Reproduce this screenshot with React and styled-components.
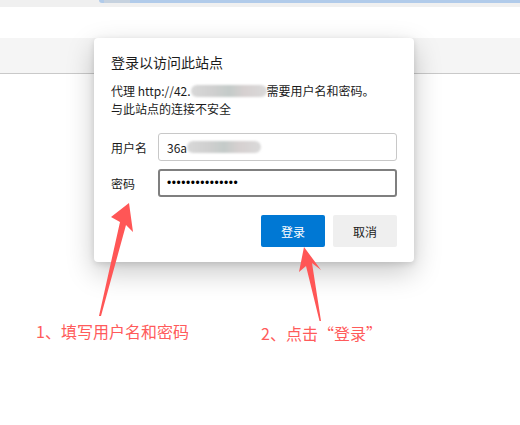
import React from "react";
import styled, { createGlobalStyle } from "styled-components";

const Global = createGlobalStyle`
  html, body { margin: 0; padding: 0; background: #fff; }
  body { font-family: "Noto Sans CJK SC", "Noto Sans", sans-serif; }
  * { box-sizing: border-box; }
`;

const Page = styled.div`
  position: relative;
  width: 520px;
  height: 425px;
  overflow: hidden;
  display: flex;
  flex-direction: column;
  background: #fff;
`;

const TopStrip = styled.div`
  height: 7px;
  background: #f0f0f0;
  display: flex;
  padding-left: 99px;
`;

const AddressBar = styled.div`
  flex: 1;
  height: 3px;
  background: #b1cbea;
  border-bottom-left-radius: 3px;
  display: flex;
  padding-left: 5px;
`;

const AddressTab = styled.div`
  width: 26px;
  height: 3px;
  background: #c6d2df;
`;

const WhiteBand = styled.div`
  height: 31px;
  background: #fff;
`;

const GrayBand = styled.div`
  height: 36px;
  background: #f5f5f5;
  border-bottom: 1px solid #c9c9c9;
`;

const Content = styled.div`
  flex: 1;
  background: #fff;
`;

const Dialog = styled.div`
  position: absolute;
  left: 94px;
  top: 38px;
  width: 320px;
  height: 224px;
  background: #fff;
  border-radius: 4px;
  box-shadow: 0 10px 28px rgba(0, 0, 0, 0.22), 0 2px 6px rgba(0, 0, 0, 0.12);
  padding: 14px 17px 15px 17px;
  display: flex;
  flex-direction: column;
  color: #1b1b1b;
`;

const Title = styled.div`
  font-size: 14px;
  line-height: 20px;
  font-weight: 400;
  margin-bottom: 10px;
`;

const Info = styled.div`
  font-size: 12px;
  line-height: 18px;
  display: flex;
  align-items: center;
  white-space: nowrap;
`;

const Blur = styled.span`
  display: inline-block;
  width: ${(p) => p.w}px;
  height: 12px;
  border-radius: 6px;
  background: linear-gradient(90deg, #d8d8d8, #cfcfcf 30%, #c4cbc9 50%, #d6d0d0 70%, #dadada);
  filter: blur(1.2px);
`;

const Form = styled.div`
  display: flex;
  flex-direction: column;
  gap: 8px;
  margin-top: 15px;
`;

const Row = styled.div`
  display: flex;
  align-items: center;
`;

const Label = styled.div`
  width: 47px;
  font-size: 12px;
`;

const Field = styled.div`
  width: 239px;
  height: 28px;
  border: ${(p) => (p.focused ? "2px solid #7f7f7f" : "1px solid #c8c8c8")};
  border-radius: 3px;
  display: flex;
  align-items: center;
  padding-left: ${(p) => (p.focused ? 7 : 8)}px;
  font-size: 12px;
  color: #1b1b1b;
  white-space: nowrap;
`;

const Dots = styled.span`
  font-family: "Liberation Sans", sans-serif;
  font-size: 12px;
  letter-spacing: 0.55px;
  color: #000;
`;

const Buttons = styled.div`
  margin-top: auto;
  display: flex;
  justify-content: flex-end;
  gap: 8px;
`;

const Button = styled.div`
  width: 64px;
  height: 32px;
  border-radius: 2px;
  display: flex;
  align-items: center;
  justify-content: center;
  font-size: 12px;
  background: ${(p) => (p.primary ? "#0078d4" : "#efefef")};
  color: ${(p) => (p.primary ? "#fff" : "#1b1b1b")};
`;

const Arrows = styled.svg`
  position: absolute;
  left: 0;
  top: 0;
  pointer-events: none;
`;

const Note = styled.div`
  position: absolute;
  left: ${(p) => p.x}px;
  top: ${(p) => p.y}px;
  font-size: 16px;
  line-height: 20px;
  color: #ff5b5b;
  white-space: nowrap;
`;

export default function App() {
  return (
    <>
      <Global />
      <Page>
        <TopStrip>
          <AddressBar>
            <AddressTab />
          </AddressBar>
        </TopStrip>
        <WhiteBand />
        <GrayBand />
        <Content />

        <Dialog>
          <Title>登录以访问此站点</Title>
          <Info>
            代理 http://42.<Blur w={76} />需要用户名和密码。
          </Info>
          <Info>与此站点的连接不安全</Info>
          <Form>
            <Row>
              <Label>用户名</Label>
              <Field>
                36a<Blur w={74} />
              </Field>
            </Row>
            <Row>
              <Label>密码</Label>
              <Field focused>
                <Dots>•••••••••••••••</Dots>
              </Field>
            </Row>
          </Form>
          <Buttons>
            <Button primary>登录</Button>
            <Button>取消</Button>
          </Buttons>
        </Dialog>

        <Arrows width="520" height="425" viewBox="0 0 520 425">
          <polygon
            fill="#ff5656"
            points="129,203 133,232 126,225 101,316 99,316 120,222 111,217"
          />
          <polygon
            fill="#ff5656"
            points="304,247 321,270 312,263 321,321 319.5,321 306,266 299,272"
          />
        </Arrows>
        <Note x={36} y={321}>1、填写用户名和密码</Note>
        <Note x={261} y={323}>2、点击“登录”</Note>
      </Page>
    </>
  );
}
